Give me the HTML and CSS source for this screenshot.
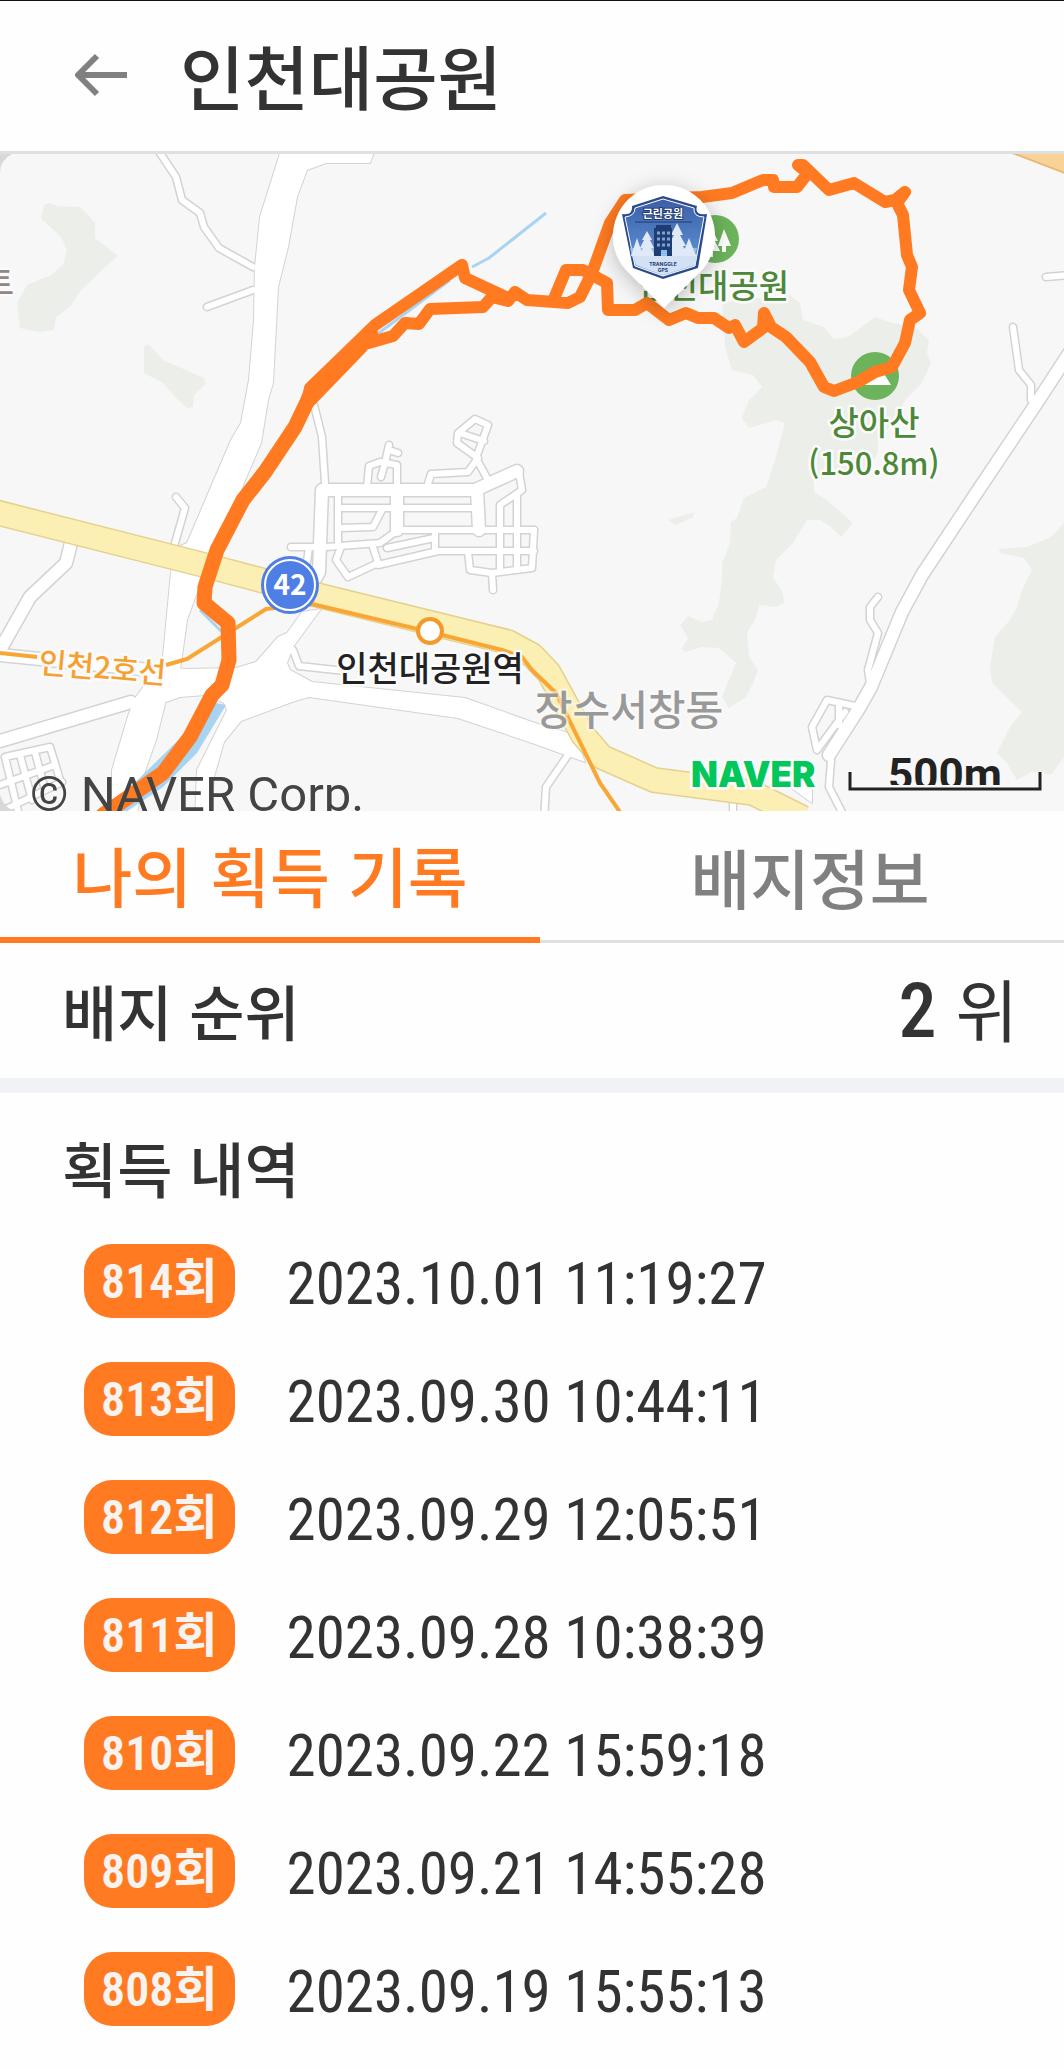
FILE: index.html
```html
<!DOCTYPE html>
<html lang="ko">
<head>
    <meta charset="UTF-8">
    <meta name="viewport" content="width=device-width, initial-scale=1.0">
    <title>인천대공원</title>
    <link rel="stylesheet" href="styles.css">
</head>
<body>
    <header class="header">
        <button class="back" type="button" aria-label="뒤로">
            <svg viewBox="0 0 54 44" width="54" height="44"><path d="M53 22H4M23 3L4 22L23 41"/></svg>
        </button>
        <h1>인천대공원</h1>
    </header>

    <!-- 지도 -->
    <div class="map">
        <svg viewBox="0 154 1064 657" role="img" aria-label="인천대공원 지도">
            <defs>
                <g id="small-roads">
                    <path d="M158 150L176 177L182 200L200 213L204 227L219 248L253 267M207 307L253 290"/>
                    <path d="M176 497L185 508L175 543M314 405L322 437L325 483M170 690L190 687L240 692"/>
                    <path d="M339 508H475M339 528L373 527L383 508M338 492V545M397 490L398 530L380 543L326 547"/>
                    <path d="M398 530H534M373 547L378 563L348 577L336 560L341 547M378 565L438 551H534M435 530V552M387 548L434 538"/>
                    <path d="M291 547H319M309 547L307 562M367 487L369 466L380 462L397 465V487M389 445L385 463L381 477M389 450L398 453"/>
                    <path d="M427 487L431 474L468 472L478 458L457 443L458 433L475 419L488 425L476 458L488 480M460 433L484 441"/>
                    <path d="M519 472L522 490L500 505V570M517 495V570M468 552L470 570L492 573L493 590M492 573L532 568L534 530"/>
                    <path d="M293 650L299 666L345 671M5 757L50 747L60 780M5 757L18 811M0 785L55 765M20 755L32 800M35 752L45 790M0 812L62 782"/>
                    <path d="M568 755L546 787L544 820M733 803V820M831 760L829 787L846 820"/>
                    <path d="M878 597L870 607V620L878 633L868 670L870 683M855 706L827 700L812 727L817 750L845 712M839 705V725"/>
                    <path d="M1046 277L1070 275M1013 327L1019 370L1031 385V400"/>
                </g>
                <g id="wide-roads">
                    <path d="M71 543L66 563L30 597L0 650M0 655L170 672M0 741L131 702"/>
                    <path d="M322 490L319 572L300 605M322 490H475L517 471M477 490L479 530M397 490V530"/>
                    <path d="M1070 352L1034 407L975 495L922 575L902 612L871 687L858 710L829 755"/>
                </g>
                <g id="main-roads">
                    <path d="M281 150L260 217L255 267L254 320L249 380L241 423L231 440L187 543L178 547L171 572L163 657L157 667L136 697L129 713L112 770V820H136L143 777L156 740L166 700L180 670L187 620L204 573L221 547L244 483L261 443L268 400L273 383L278 287L288 247L297 197L307 170L326 163H370L375 150Z"/>
                    <path d="M302 612L287 633L278 637L256 662L236 668L187 669L160 667L166 702L180 697L205 695L224 703L227 710L197 770L195 820H210L214 777L224 742L241 721L292 702L309 697L458 718L532 743L585 762L575 735L532 722L465 698L312 682L290 670L287 663L293 647L321 609Z"/>
                    <path d="M790 787L812 770V803Z"/>
                </g>
                <linearGradient id="sky" x1="0" y1="0" x2="0" y2="1">
                    <stop offset="0" stop-color="#3c5ea8"/>
                    <stop offset=".6" stop-color="#5585c8"/>
                    <stop offset="1" stop-color="#93bfe6"/>
                </linearGradient>
                <filter id="pin-shadow" x="-50%" y="-50%" width="200%" height="200%">
                    <feDropShadow dx="0" dy="4" stdDeviation="10" flood-opacity=".25"/>
                </filter>
            </defs>

            <rect class="land" y="154" width="1064" height="657"/>

            <g class="forest">
                <path d="M49 203L58 206L80 207L90 217L95 223V238L117 255L115 258L81 290L70 307L56 317L54 330L39 332L20 328L17 303L27 285L51 275L63 265L67 250L61 237L41 218L44 205Z"/>
                <path d="M148 344L163 360L204 378L206 383L194 395L193 407L187 408L176 398L163 383L144 373V347Z"/>
                <path d="M722 303L736 300L790 295L800 303L803 320L824 327L834 339L848 337L875 317L892 323L915 327L929 340L927 353L931 363L922 383L905 400L898 417L878 440V453L865 473L814 480V492L827 500L853 523L841 537L831 527L820 520H807L793 543L776 560L773 577L783 593L784 603L776 607L759 605L756 618L747 633L749 657L758 670L753 683L746 697L729 708L722 697L736 663L719 648L702 647L685 652L682 648L688 638L680 625L688 616L702 622L712 620L719 603L722 577V563L730 543L731 522L737 518L744 498L766 487L775 460L785 423L776 420L749 428L742 418L749 400L762 387L753 375L732 370L725 347L724 327Z"/>
                <path d="M668 520L695 512L693 517L676 525Z"/>
                <path d="M1064 523L1051 537L1027 547L999 549L1000 553L1024 558L1032 570L1022 590L1017 607L1010 620L995 637L990 667L992 683L1022 712L1010 727L997 753L1007 763L1017 780L1031 772L1051 775L1064 757Z"/>
            </g>

            <g class="roads">
                <use class="edge small" href="#small-roads"/>
                <use class="edge wide" href="#wide-roads"/>
                <use class="edge main" href="#main-roads"/>
                <use class="fill small" href="#small-roads"/>
                <use class="fill wide" href="#wide-roads"/>
                <use class="fill main" href="#main-roads"/>
            </g>

            <path class="highway" d="M1010 152L1070 175V150Z"/>
            <path class="route42-edge" d="M-5 512L204 565L321 596L508 642L532 655L549 673L583 735L602 757L654 780L753 793L803 818"/>
            <path class="route42" d="M-5 512L204 565L321 596L508 642L532 655L549 673L583 735L602 757L654 780L753 793L803 818"/>

            <path class="stream" d="M472 267L489 258L546 213M372 338L450 280M200 610L222 632"/>
            <path class="pond" d="M216 703L226 705L197 753L163 787L126 812H105Z"/>

            <path class="subway" d="M0 653L37 657M166 665L187 659L266 609L312 604L430 632L502 650L522 657L532 670L556 693L600 783L622 815"/>
            <circle class="station" cx="430" cy="631" r="12"/>

            <g class="poi">
                <circle cx="715" cy="239" r="24"/>
                <path d="M712 229L718 241H715L720 251H713V257H709V251H704ZM724 229L731 246H726V252H722V246H718Z"/>
                <circle cx="875" cy="376" r="24"/>
                <path d="M859 385L872 370L878 376L883 372L891 385Z"/>
            </g>

            <g class="label">
                <text class="poi-name" x="789" y="298" text-anchor="end">인천대공원</text>
                <text class="poi-name" x="874" y="435" text-anchor="middle">상아산</text>
                <text class="poi-name height" x="874" y="475" text-anchor="middle">(150.8m)</text>
                <text class="dong" x="629" y="725" text-anchor="middle">장수서창동</text>
                <text class="station-name" x="430" y="681" text-anchor="middle">인천대공원역</text>
                <text class="line-name" x="38" y="673" transform="rotate(5 38 673)">인천2호선</text>
                <text class="mart" x="14" y="295" text-anchor="end">트</text>
                <text class="naver" x="691" y="787">NAVER</text>
            </g>

            <g class="shield42">
                <circle cx="290" cy="585" r="29"/>
                <circle class="ring" cx="290" cy="585" r="25"/>
                <text x="290" y="595" text-anchor="middle">42</text>
            </g>

            <!-- 이동 경로 -->
            <g class="track">
                <path class="double" d="M103 815L163 773L190 737L212 695L222 685L229 660L228 623L204 603L205 587L217 550L243 500L265 472L295 427L307 402L310 395"/>
                <path d="M307 402L310 388L375 325L462 265L465 278L508 298"/>
                <path d="M309 402L340 370L365 344L393 336L405 323L419 324L430 309L483 307L492 297L508 301L515 292L527 300L568 303L580 297L592 273L610 223L625 200L702 197L732 193L763 180H773L774 187H797L808 173L798 165H803L829 190L854 183L885 202L895 200L905 192L897 203L903 215L907 255L912 267L909 290L920 313L910 320L905 343L892 367L875 372L858 382L834 391L824 387L810 362L786 337L771 327L764 313L763 328L744 342L735 325L729 328L714 318H698L686 313L669 320L647 303L635 310H608L607 283L583 270H566L553 301"/>
                <path d="M312 392L340 365L372 333"/>
            </g>

            <!-- 배지 핀 -->
            <path class="pin" filter="url(#pin-shadow)" d="M664 308L628 272A51 51 0 1 1 700 272Z"/>
            <g class="badge">
                <path class="badge-back" d="M663 196L697 206Q694 216 707 214L698 268L663 279L633 268L622 214Q633 216 632 206Z"/>
                <path class="badge-face" d="M663 199L694 208Q693 217 704 217L695 266L663 276L635 266L625 217Q635 216 635 208Z"/>
                <path class="badge-water" d="M630 248H697L694 258H632Z"/>
                <path class="badge-snow" d="M632 254L663 256L697 254L695 265L663 275L636 265Z"/>
                <path class="badge-tree" d="M677 223L671 235H674L668 246H672L667 256H688L683 246H686L680 235H683ZM647 231L642 240H644L640 248H643L639 256H655L651 248H654L650 240H652ZM637 238L631 256H643ZM689 238L682 256H696Z"/>
                <path class="badge-house" d="M656 225H671V228H672V256H667V250H661V256H654V228H656Z"/>
                <path class="badge-window" d="M657 233H660M662 233H665M667 233H670M657 239H660M662 239H665M667 239H670M657 245H660M662 245H665M667 245H670"/>
                <path class="badge-line" d="M635 222H692"/>
                <text class="badge-title" x="663" y="218" text-anchor="middle">근린공원</text>
                <text class="badge-brand" x="663" y="266" text-anchor="middle">TRANGGLE</text>
                <text class="badge-brand" x="663" y="272" text-anchor="middle">GPS</text>
            </g>

            <text class="copyright" x="30" y="811">© NAVER Corp.</text>
            <g class="scale">
                <text x="945" y="790" text-anchor="middle">500m</text>
                <path class="scale-halo" d="M850 772V789H1040V772"/>
                <path d="M850 772V789H1040V772"/>
            </g>
            <path class="corner" d="M0 154H12Q0 160 0 173ZM0 795Q4 808 15 811H0Z"/>
        </svg>
    </div>

    <nav class="tabs">
        <button class="tab active" type="button">나의 획득 기록</button>
        <button class="tab" type="button">배지정보</button>
    </nav>

    <section class="rank">
        <h2>배지 순위</h2>
        <p><strong>2</strong> 위</p>
    </section>

    <section class="history">
        <h2>획득 내역</h2>
        <ol>
            <li><span class="count">814회</span><time>2023.10.01 11:19:27</time></li>
            <li><span class="count">813회</span><time>2023.09.30 10:44:11</time></li>
            <li><span class="count">812회</span><time>2023.09.29 12:05:51</time></li>
            <li><span class="count">811회</span><time>2023.09.28 10:38:39</time></li>
            <li><span class="count">810회</span><time>2023.09.22 15:59:18</time></li>
            <li><span class="count">809회</span><time>2023.09.21 14:55:28</time></li>
            <li><span class="count">808회</span><time>2023.09.19 15:55:13</time></li>
        </ol>
    </section>
</body>
</html>
```

FILE: styles.css
```css
* {
    box-sizing: border-box;
    margin: 0;
    padding: 0;
}
body {
    font-family: 'Noto Sans CJK KR', sans-serif;
    background: #fefefe;
    color: #333;
    overflow-x: hidden;
}
button {
    font: inherit;
    border: 0;
    background: none;
}

/* header */
.header {
    display: flex;
    align-items: center;
    gap: 52px;
    height: 154px;
    padding: 0 74px 2px;
    border-top: 1px solid #111;
    border-bottom: 3px solid #e0e0e0;
}
.header h1 {
    font-size: 70px;
    line-height: 100px;
    font-weight: 500;
}
.back {
    display: flex;
}
.back path {
    fill: none;
    stroke: #808080;
    stroke-width: 6;
    stroke-linejoin: round;
}

/* map */
.map svg {
    display: block;
    width: 100%;
    height: auto;
}
.land { fill: #f7f7f7; }
.forest { fill: #ecefe9; }
.corner { fill: #d8d8d8; }
.roads {
    stroke-linejoin: round;
    stroke-linecap: round;
}
.edge { fill: none; stroke: #d3d3d3; }
.fill { fill: none; stroke: #fff; }
.edge.small { stroke-width: 9px; }
.fill.small { stroke-width: 6px; }
.edge.wide { stroke-width: 15px; }
.fill.wide { stroke-width: 12px; }
.edge.main { stroke-width: 2px; }
.fill.main { fill: #fff; stroke: none; }
.highway {
    fill: #fad295;
    stroke: #e8b878;
    stroke-width: 2px;
}
.route42, .route42-edge, .stream, .subway, .track {
    fill: none;
    stroke-linejoin: round;
}
.route42-edge { stroke: #e5d18f; stroke-width: 26px; }
.route42 { stroke: #fcefb4; stroke-width: 23px; }
.stream { stroke: #a8d4f2; stroke-width: 3px; }
.pond { fill: #a8d4f2; }
.subway { stroke: #f8a635; stroke-width: 4px; }
.station {
    fill: #fff;
    stroke: #f39a2b;
    stroke-width: 4px;
}
.poi circle { fill: #6db35b; }
.poi path { fill: #fff; }
.label text {
    paint-order: stroke;
    stroke: #fbfbfb;
    stroke-width: 5px;
    stroke-linejoin: round;
    font-weight: 500;
}
.label .poi-name { font-size: 33px; fill: #4c8838; }
.label .height { font-size: 31px; }
.label .dong { font-size: 41px; fill: #999; stroke-opacity: .5; }
.label .station-name { font-size: 34px; fill: #222; }
.label .line-name { font-size: 30px; fill: #f5a030; }
.label .mart { font-size: 33px; fill: #93877f; }
.label .naver {
    font-family: Inter, sans-serif;
    font-size: 35px;
    font-weight: 900;
    fill: #03c75a;
}
.shield42 circle { fill: #4f7fe4; }
.shield42 .ring {
    stroke: #fff;
    stroke-width: 2px;
}
.shield42 text {
    font-size: 28px;
    font-weight: 700;
    fill: #fff;
}
.track {
    stroke: #ff7a20;
    stroke-width: 12px;
    stroke-linecap: round;
}
.track .double { stroke-width: 15px; }
.pin { fill: #fff; }
.badge-back { fill: #2b4b8c; }
.badge-face {
    fill: url(#sky);
    stroke: #fff;
    stroke-width: 1px;
}
.badge-water { fill: #8cc0ea; }
.badge-snow { fill: #d3e1f4; }
.badge-tree { fill: #dfe9f7; }
.badge-house { fill: #1f3c73; }
.badge-window { stroke: #7ea3d8; stroke-width: 3px; }
.badge-line { stroke: #1f3c73; stroke-width: 1px; }
.badge-title {
    font-size: 11px;
    font-weight: 700;
    fill: #fff;
    paint-order: stroke;
    stroke: #1f3c73;
    stroke-width: 2px;
}
.badge-brand {
    font-family: Inter, sans-serif;
    font-size: 5px;
    font-weight: 700;
    fill: #1f3c73;
}
.copyright {
    font-family: Roboto, sans-serif;
    font-size: 49px;
    fill: #444;
}
.scale text {
    font-family: Roboto, sans-serif;
    font-size: 44px;
    font-weight: 700;
    fill: #222;
}
.scale path {
    fill: none;
    stroke: #222;
    stroke-width: 3px;
}
.scale .scale-halo { stroke: #f7f7f7; stroke-width: 8px; }

/* tabs */
.tabs {
    display: flex;
    margin-right: -16px;
    height: 132px;
}
.tab {
    flex: 1;
    border-bottom: 3px solid #e0e0e0;
    font-size: 65px;
    line-height: 94px;
    font-weight: 500;
    color: #808080;
}
.tab.active {
    border-bottom: 6px solid #ff7a20;
    color: #ff7a20;
}

/* rank */
.rank {
    display: flex;
    align-items: center;
    justify-content: space-between;
    height: 150px;
    padding: 0 46px 2px 62px;
    border-bottom: 15px solid #f0f2f5;
}
.rank h2, .history h2 {
    font-size: 60px;
    line-height: 88px;
    font-weight: 500;
}
.rank p {
    font-size: 68px;
    line-height: 88px;
}
.rank strong {
    font-family: 'Roboto Condensed', 'Noto Sans CJK KR', sans-serif;
    font-size: 76px;
    font-weight: 500;
}

/* history */
.history {
    padding: 30px 62px 41px;
}
.history ol {
    list-style: none;
    padding: 33px 22px 0;
}
.history li {
    display: flex;
    align-items: center;
    gap: 52px;
    height: 74px;
    margin-bottom: 44px;
}
.count {
    padding: 2px 17px 0;
    border-radius: 28px;
    background: #ff7a20;
    color: #f7f3f0;
    font-family: 'Roboto Condensed', 'Noto Sans CJK KR', sans-serif;
    font-size: 48px;
    line-height: 72px;
    font-weight: 600;
}
.history time {
    padding-top: 6px;
    font-family: 'Roboto Condensed', 'Noto Sans CJK KR', sans-serif;
    font-size: 59px;
    line-height: 74px;
    white-space: nowrap;
}
```
